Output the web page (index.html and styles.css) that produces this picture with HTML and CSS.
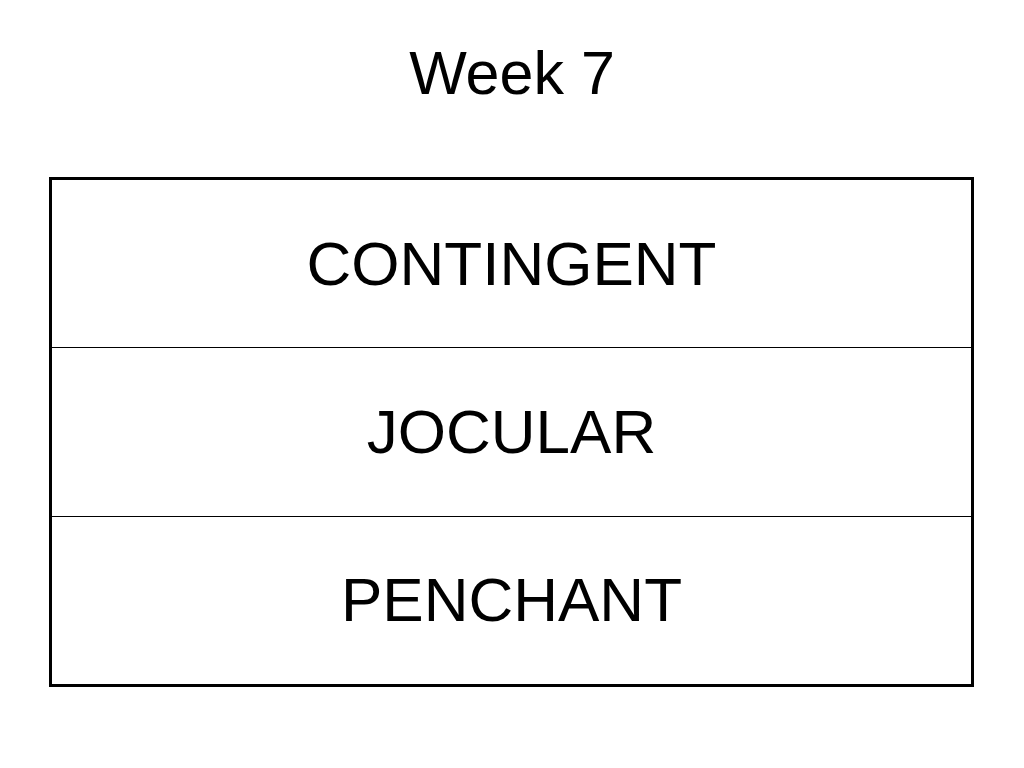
FILE: index.html
```html
<!DOCTYPE html>
<html lang="en">
<head>
<meta charset="utf-8">
<title>Week 7</title>
<link rel="stylesheet" href="styles.css">
</head>
<body>
<main class="slide">
  <h1 class="title">Week 7</h1>
  <div class="words">
    <div class="word">CONTINGENT</div>
    <div class="word">JOCULAR</div>
    <div class="word">PENCHANT</div>
  </div>
</main>
</body>
</html>
```

FILE: styles.css
```css
html, body {
  margin: 0;
  padding: 0;
  background: #ffffff;
}

.slide {
  width: 1024px;
  height: 768px;
  box-sizing: border-box;
  padding: 43px 0 0 49px;
  font-family: "Liberation Sans", Arial, sans-serif;
  color: #000000;
}

.title {
  margin: 0 49px 0 0;
  font-size: 61px;
  font-weight: normal;
  line-height: 61px;
  text-align: center;
}

.words {
  margin-top: 73px;
  width: 925px;
  height: 510px;
  box-sizing: border-box;
  border: 3px solid #000000;
  display: flex;
  flex-direction: column;
}

.word {
  flex: 1 1 0;
  display: flex;
  align-items: center;
  justify-content: center;
  font-size: 62px;
  line-height: 62px;
  border-bottom: 1px solid #000000;
}

.word:last-child {
  border-bottom: none;
}
```
